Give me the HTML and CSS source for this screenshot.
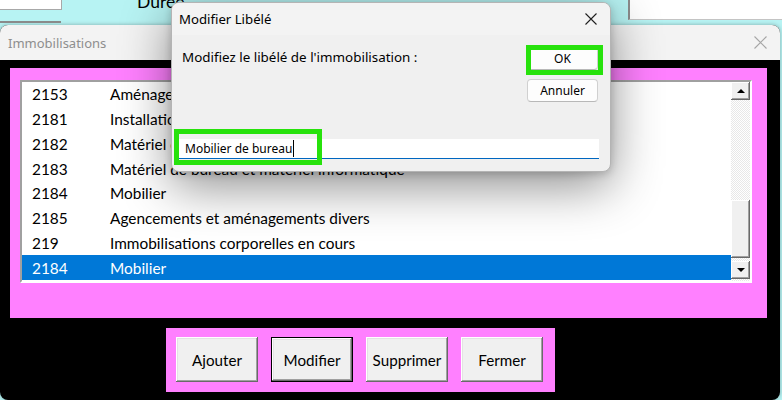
FILE: index.html
```html
<!DOCTYPE html>
<html lang="fr">
<head>
<meta charset="utf-8">
<title>Immobilisations</title>
<link rel="stylesheet" href="styles.css">
</head>
<body>
<div class="desk">
  <div class="bg-strip">
    <div class="bg-left">
      <div class="bg-box"></div>
      <div class="bg-line"></div>
    </div>
    <div class="bg-title">Durée</div>
    <div class="bg-box-right"></div>
  </div>

  <div class="win">
    <div class="win-titlebar">
      <span class="win-title">Immobilisations</span>
      <svg class="win-close" width="13" height="13" viewBox="0 0 13 13"><path d="M0.5 0.5 L12.5 12.5 M12.5 0.5 L0.5 12.5" stroke="#a6a6a6" stroke-width="1.1" fill="none"/></svg>
    </div>
    <div class="win-body">
      <div class="panel">
        <div class="listbox">
          <div class="rows">
            <div class="row"><span class="code">2153</span><span class="label">Aménagements</span></div>
            <div class="row"><span class="code">2181</span><span class="label">Installations générales, agencements</span></div>
            <div class="row"><span class="code">2182</span><span class="label">Matériel de transport</span></div>
            <div class="row"><span class="code">2183</span><span class="label">Matériel de bureau et matériel informatique</span></div>
            <div class="row"><span class="code">2184</span><span class="label">Mobilier</span></div>
            <div class="row"><span class="code">2185</span><span class="label">Agencements et aménagements divers</span></div>
            <div class="row"><span class="code">219</span><span class="label">Immobilisations corporelles en cours</span></div>
            <div class="row sel"><span class="code">2184</span><span class="label">Mobilier</span></div>
          </div>
          <div class="scrollbar">
            <div class="sb-btn"><span class="arrow-up"></span></div>
            <div class="sb-track-top"></div>
            <div class="sb-thumb"></div>
            <div class="sb-track-bottom"></div>
            <div class="sb-btn"><span class="arrow-down"></span></div>
          </div>
        </div>
      </div>
      <div class="btn-panel">
        <button class="btn">Ajouter</button>
        <button class="btn focus">Modifier</button>
        <button class="btn">Supprimer</button>
        <button class="btn">Fermer</button>
      </div>
    </div>
  </div>

  <div class="dialog">
    <div class="dlg-titlebar">
      <span class="dlg-title">Modifier Libélé</span>
      <svg class="dlg-close" width="12" height="12" viewBox="0 0 12 12"><path d="M0.5 0.5 L11.5 11.5 M11.5 0.5 L0.5 11.5" stroke="#1f1f1f" stroke-width="1.1" fill="none"/></svg>
    </div>
    <div class="dlg-body">
      <div class="dlg-top">
        <span class="dlg-label">Modifiez le libélé de l'immobilisation :</span>
        <div class="dlg-btns">
          <button class="dbtn">OK</button>
          <button class="dbtn">Annuler</button>
        </div>
      </div>
      <div class="dlg-input"><span class="caret">Mobilier de bureau</span></div>
    </div>
    <div class="hl hl-ok"></div>
    <div class="hl hl-input"></div>
  </div>
</div>
</body>
</html>
```
FILE: styles.css
```css
* { box-sizing: border-box; }

body {
  margin: 0;
  width: 782px;
  height: 400px;
  overflow: hidden;
  background: #b7f3f3;
  font-family: "Noto Sans", "Open Sans", sans-serif;
}

.desk {
  position: relative;
  width: 782px;
  height: 400px;
}

/* background application strip */
.bg-strip {
  height: 25px;
  display: flex;
  align-items: flex-start;
}
.bg-left {
  width: 62px;
  display: flex;
  flex-direction: column;
}
.bg-box {
  height: 10px;
  background: #fff;
  border-right: 1px solid #a8a8a8;
  border-bottom: 1px solid #a8a8a8;
}
.bg-line {
  margin-top: 11px;
  width: 61px;
  border-top: 2px solid #8a8a8a;
}
.bg-title {
  margin-left: 75px;
  margin-top: -7px;
  font-family: Lato, "Noto Sans", sans-serif;
  font-size: 17.5px;
  line-height: 17px;
  color: #000;
}
.bg-box-right {
  margin-left: auto;
  width: 154px;
  height: 20px;
  background: #fff;
  border-left: 2px solid #8c8c8c;
  border-bottom: 1px solid #c4c4c4;
}

/* main window */
.win {
  width: 780px;
  height: 375px;
  border-radius: 8px;
  overflow: hidden;
  background: #000;
  box-shadow: 0 0 4px rgba(0, 0, 0, 0.3);
}
.win-titlebar {
  height: 35px;
  background: #f3f3f3;
  display: flex;
  align-items: center;
  justify-content: space-between;
  padding: 0 13px 0 8px;
}
.win-title {
  color: #8e8e8e;
  font-size: 13px;
}
.win-body {
  padding: 8px 0 0 10px;
}
.panel {
  width: 757px;
  height: 250px;
  background: #ff80ff;
  padding: 12px 0 0 10px;
}
.listbox {
  width: 732px;
  height: 203px;
  background: #fff;
  border-style: solid;
  border-width: 2px;
  border-color: #a0a0a0 #ffffff #ffffff #a0a0a0;
  display: flex;
}
.rows {
  flex: 1;
}
.row {
  height: 24.75px;
  display: flex;
  align-items: center;
  font-family: Lato, "Noto Sans", sans-serif;
  font-size: 15.4px;
  color: #000;
  white-space: nowrap;
}
.row.sel {
  background: #0078d7;
  color: #fff;
}
.code {
  width: 88px;
  padding-left: 10px;
}

.scrollbar {
  width: 19px;
  display: flex;
  flex-direction: column;
  background-color: #f4f4f4;
  background-image: repeating-conic-gradient(#e8e8e8 0 25%, #ffffff 0 50%);
  background-size: 2px 2px;
}
.sb-btn, .sb-thumb {
  background: #f0f0f0;
  box-shadow: inset -1px -1px #696969, inset 1px 1px #ffffff, inset -2px -2px #a0a0a0;
}
.sb-btn {
  height: 18px;
  display: flex;
  align-items: center;
  justify-content: center;
}
.sb-track-top { height: 100px; }
.sb-thumb { height: 58px; }
.sb-track-bottom { height: 3px; }
.arrow-up, .arrow-down {
  width: 0;
  height: 0;
  border-left: 4px solid transparent;
  border-right: 4px solid transparent;
}
.arrow-up { border-bottom: 4px solid #000; }
.arrow-down { border-top: 4px solid #000; }

/* bottom buttons */
.btn-panel {
  margin: 10px 0 0 156px;
  width: 389px;
  height: 64px;
  background: #ff80ff;
  display: flex;
  gap: 13px;
  padding: 9px 0 0 10px;
}
.btn {
  width: 82px;
  height: 45px;
  background: #f0f0f0;
  border: none;
  padding: 0;
  font-family: Lato, "Noto Sans", sans-serif;
  font-size: 15.2px;
  color: #000;
  box-shadow: inset -1px -1px #696969, inset 1px 1px #ffffff, inset -2px -2px #a0a0a0, inset 2px 2px #e3e3e3;
}
.btn.focus {
  border: 1px solid #000;
}

/* dialog */
.dialog {
  position: absolute;
  left: 171px;
  top: 2px;
  width: 440px;
  height: 170px;
  background: #f0f0f0;
  border: 1px solid #b4b4b4;
  border-radius: 8px;
  box-shadow: 0 14px 50px rgba(0, 0, 0, 0.45), 0 2px 8px rgba(0, 0, 0, 0.18);
}
.dlg-titlebar {
  height: 32px;
  background: #f3f3f3;
  border-radius: 7px 7px 0 0;
  display: flex;
  align-items: center;
  justify-content: space-between;
  padding: 0 13px 0 7px;
}
.dlg-title {
  font-size: 13.2px;
  color: #000;
}
.dlg-body {
  padding: 12px 12px 0 10px;
}
.dlg-top {
  display: flex;
  justify-content: space-between;
  align-items: flex-start;
}
.dlg-label {
  margin-top: 1px;
  font-size: 13.4px;
  line-height: 18px;
  color: #000;
}
.dlg-btns {
  display: flex;
  flex-direction: column;
  gap: 9px;
}
.dbtn {
  width: 71px;
  height: 23px;
  background: #fdfdfd;
  border: 1px solid #d0d0d0;
  border-bottom-color: #b8b8b8;
  border-radius: 4px;
  font-family: "Noto Sans", sans-serif;
  font-size: 12px;
  color: #000;
  padding: 0;
}
.dlg-input {
  margin: 37px 0 0 -6px;
  width: 423px;
  height: 20px;
  background: #fff;
  border-bottom: 1px solid #0067c0;
  padding-left: 9px;
  font-size: 12px;
  line-height: 19px;
  color: #000;
}
.caret {
  border-right: 1px solid #000;
  padding-right: 1px;
}

/* annotation highlights */
.hl {
  position: absolute;
  border: 5px solid #27e20c;
}
.hl-ok {
  left: 354px;
  top: 42px;
  width: 77px;
  height: 30px;
}
.hl-input {
  left: 2px;
  top: 126px;
  width: 148px;
  height: 36px;
}
```
